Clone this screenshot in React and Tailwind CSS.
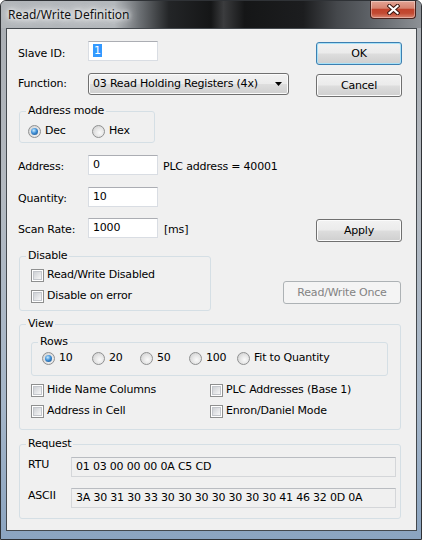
import React from 'react'

function Group({ title, className = '', children }) {
  return (
    <fieldset className={`rounded-[3px] border border-[#d5dfe5] ${className}`}>
      <legend className="ml-[6px] px-[2px] leading-[14px]">{title}</legend>
      {children}
    </fieldset>
  )
}

function Radio({ checked, label, className = '' }) {
  return (
    <div className={`flex items-center gap-[4px] h-[14px] ${className}`}>
      <span className="w-[13px] h-[13px] shrink-0 rounded-full border border-[#8f9091] bg-[radial-gradient(circle_at_60%_60%,#fafafa_0%,#e6e6e6_45%,#c9c9c9_100%)] flex items-center justify-center">
        {checked && <span className="w-[7px] h-[7px] rounded-full bg-[radial-gradient(circle_at_40%_35%,#c9ecff_0%,#3f8fd6_45%,#17497f_100%)]" />}
      </span>
      <span>{label}</span>
    </div>
  )
}

function Check({ label }) {
  return (
    <div className="flex items-center gap-[3px] h-[14px]">
      <span className="w-[13px] h-[13px] shrink-0 border border-[#8e8f8f] bg-white p-[1px]">
        <span className="block w-full h-full border border-[#c3c6cb] bg-[linear-gradient(135deg,#cdd0d4_0%,#e6e7e9_60%,#f7f7f7_100%)]" />
      </span>
      <span>{label}</span>
    </div>
  )
}

function Edit({ children, className = '' }) {
  return (
    <div className={`h-[20px] w-[70px] border border-[#d9dde3] border-t-[#abadb3] bg-white pl-[4px] pt-[2px] leading-[14px] ${className}`}>
      {children}
    </div>
  )
}

function Btn({ children, variant, className = '' }) {
  const look = variant === 'default'
    ? 'border-[#3c7fb1] shadow-[inset_0_0_0_1px_#a8e1f7]'
    : variant === 'disabled'
      ? 'border-[#adb2b5] text-[#838383] bg-none bg-[#f4f4f4]'
      : 'border-[#707070] shadow-[inset_0_0_0_1px_#fbfbfb]'
  return (
    <div className={`h-[23px] flex items-center justify-center rounded-[3px] border bg-[linear-gradient(180deg,#f2f2f2_0%,#ebebeb_48%,#dddddd_52%,#cfcfcf_100%)] ${look} ${className}`}>
      {children}
    </div>
  )
}

function Readout({ children }) {
  return (
    <div className="flex-1 h-[20px] border border-[#d4d6d9] border-t-[#b9bcc1] bg-[#f0f0f0] pl-[4px] pt-[2px]">{children}</div>
  )
}

export default function App() {
  return (
    <div className="w-[422px] h-[540px] flex flex-col border border-[#2f3236] rounded-t-[6px] overflow-hidden bg-[linear-gradient(180deg,#a9adb2_0%,#b3b9c0_35%,#a5b6c9_75%,#8ba4c0_100%)] font-['DejaVu_Sans',sans-serif] text-[11px] leading-[14px] tracking-[-0.2px] text-black">
      {/* caption */}
      <div className="h-[27px] shrink-0 flex items-start bg-[linear-gradient(90deg,#b1b5b9_0%,#b4b8bc_27%,#6c7074_33%,#232527_40%,#151617_50%,#3b3c3e_53%,#151617_58%,#1c1d1f_72%,#45484c_80%,#5b5f64_87%,#8d9196_100%)]">
        <div className="ml-[7px] mt-[5px] font-['Noto_Sans',sans-serif] text-[12px] leading-[17px] tracking-normal text-[#111] [text-shadow:0_0_4px_#fff,0_0_8px_#fff,0_0_12px_#fff]">
          Read/Write Definition
        </div>
        <div className="ml-auto mr-[5px] w-[46px] h-[18px] flex items-center justify-center rounded-b-[4px] border border-t-0 border-[#4a211b] bg-[linear-gradient(180deg,#e3a394_0%,#d68370_42%,#c1432c_50%,#c24a32_72%,#d98570_100%)] shadow-[inset_0_0_0_1px_rgba(255,255,255,0.35)]">
          <svg width="13" height="11" viewBox="0 0 13 11">
            <path d="M2.5 2L10.5 9M10.5 2L2.5 9" stroke="#3c1710" strokeWidth="4.2" strokeLinecap="square" />
            <path d="M2.5 2L10.5 9M10.5 2L2.5 9" stroke="#ffffff" strokeWidth="2.2" strokeLinecap="square" />
          </svg>
        </div>
      </div>

      {/* client */}
      <div className="flex-1 ml-[5px] mr-[4px] mb-[8px] border border-[#44494e] bg-[#f0f0f0] flex flex-col pl-[11px] pr-[14px] pt-[12px]">
        <div className="flex items-start h-[24px]">
          <div className="w-[70px] mt-[6px]">Slave ID:</div>
          <Edit><span className="bg-[#3399ff] text-white px-[1px]">1</span></Edit>
          <Btn variant="default" className="ml-auto mt-[1px] w-[86px]">OK</Btn>
        </div>

        <div className="flex items-start h-[24px] mt-[8px]">
          <div className="w-[70px] mt-[4px]">Function:</div>
          <div className="w-[201px] h-[22px] flex items-center rounded-[3px] border border-[#707070] shadow-[inset_0_0_0_1px_#fbfbfb] bg-[linear-gradient(180deg,#f2f2f2_0%,#ebebeb_48%,#dddddd_52%,#cfcfcf_100%)] pl-[4px] pr-[6px]">
            <span>03 Read Holding Registers (4x)</span>
            <svg className="ml-auto" width="7" height="4" viewBox="0 0 7 4"><path d="M0 0H7L3.5 4Z" fill="#000" /></svg>
          </div>
          <Btn className="ml-auto mt-[1px] w-[86px]">Cancel</Btn>
        </div>

        <Group title="Address mode" className="mt-[7px] ml-[1px] w-[136px]">
          <div className="flex pl-[8px] pt-[6px] pb-[4px]">
            <Radio checked label="Dec" className="w-[64px]" />
            <Radio label="Hex" />
          </div>
        </Group>

        <div className="flex items-start mt-[12px]">
          <div className="w-[70px] mt-[5px]">Address:</div>
          <Edit>0</Edit>
          <div className="ml-[5px] mt-[5px]">PLC address = 40001</div>
        </div>

        <div className="flex items-start mt-[12px]">
          <div className="w-[70px] mt-[5px]">Quantity:</div>
          <Edit>10</Edit>
        </div>

        <div className="flex items-start h-[24px] mt-[11px]">
          <div className="w-[70px] mt-[5px]">Scan Rate:</div>
          <Edit>1000</Edit>
          <div className="ml-[6px] mt-[5px]">[ms]</div>
          <Btn className="ml-auto mt-[1px] w-[86px]">Apply</Btn>
        </div>

        <div className="flex items-end mt-[7px]">
          <Group title="Disable" className="ml-[1px] w-[192px]">
            <div className="flex flex-col gap-[7px] pl-[11px] pt-[5px] pb-[7px]">
              <Check label="Read/Write Disabled" />
              <Check label="Disable on error" />
            </div>
          </Group>
          <Btn variant="disabled" className="ml-auto mr-[1px] mb-[7px] w-[118px]">Read/Write Once</Btn>
        </div>

        <Group title="View" className="mt-[6px] ml-[1px] w-[382px]">
          <div className="pl-[11px] pr-[12px] pt-[4px] pb-[11px]">
            <Group title="Rows">
              <div className="flex pl-[10px] pt-[2px] pb-[10px]">
                <Radio checked label="10" className="w-[50px]" />
                <Radio label="20" className="w-[48px]" />
                <Radio label="50" className="w-[49px]" />
                <Radio label="100" className="w-[48px]" />
                <Radio label="Fit to Quantity" />
              </div>
            </Group>
            <div className="grid grid-cols-[179px_1fr] gap-y-[7px] mt-[7px]">
              <Check label="Hide Name Columns" />
              <Check label="PLC Addresses (Base 1)" />
              <Check label="Address in Cell" />
              <Check label="Enron/Daniel Mode" />
            </div>
          </div>
        </Group>

        <Group title="Request" className="mt-[7px] ml-[1px] w-[382px]">
          <div className="flex flex-col gap-[11px] pl-[8px] pr-[4px] pt-[6px] pb-[10px]">
            <div className="flex items-start">
              <div className="w-[43px] mt-[1px]">RTU</div>
              <Readout>01 03 00 00 00 0A C5 CD</Readout>
            </div>
            <div className="flex items-start">
              <div className="w-[43px] mt-[1px]">ASCII</div>
              <Readout>3A 30 31 30 33 30 30 30 30 30 30 30 41 46 32 0D 0A</Readout>
            </div>
          </div>
        </Group>
      </div>
    </div>
  )
}
